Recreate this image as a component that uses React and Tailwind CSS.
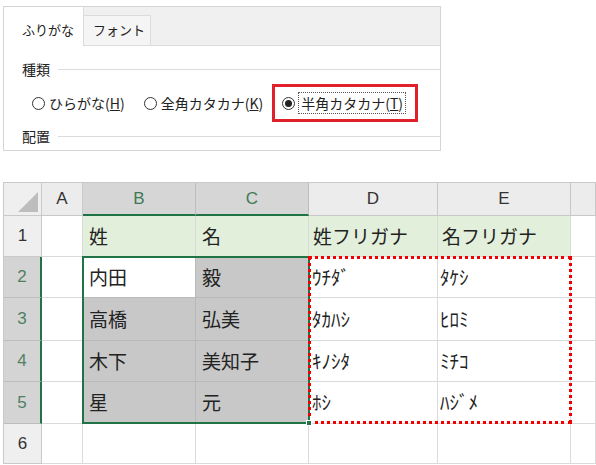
import React from "react";

const cols = ["38px", "41px", "113px", "113px", "129px", "133px", "1fr"];

function Radio({ checked }) {
  return (
    <span className="w-[13px] h-[13px] rounded-full border border-[#333] bg-white flex items-center justify-center shrink-0">
      {checked && <span className="w-[7px] h-[7px] rounded-full bg-[#222]" />}
    </span>
  );
}

function HeaderCell({ children, sel, className = "" }) {
  return (
    <div
      className={
        "flex items-center justify-center border-r border-b text-[17px] font-['Liberation_Sans',sans-serif] " +
        (sel
          ? "bg-[#d6d6d6] text-[#3f7a57] border-[#bdbdbd] "
          : "bg-[#ececec] text-[#333] border-[#c9c9c9] ") +
        className
      }
    >
      {children}
    </div>
  );
}

function RowHead({ children, sel }) {
  return (
    <div
      className={
        "flex items-center justify-center border-r border-b text-[17px] font-['Liberation_Sans',sans-serif] " +
        (sel
          ? "bg-[#d4d4d4] text-[#4f8065] border-[#bdbdbd] border-r-[2px] border-r-[#217346]"
          : "bg-[#efefef] text-[#333] border-[#c9c9c9]")
      }
    >
      {children}
    </div>
  );
}

function Cell({ children, bg = "bg-white", pad = "pl-[6px]", line = "border-[#dadada]" }) {
  return (
    <div
      className={
        "flex items-center border-r border-b text-[#222] text-[19px] " +
        bg +
        " " +
        pad +
        " " +
        line
      }
    >
      {children}
    </div>
  );
}

export default function App() {
  const data = [
    ["内田", "毅", "ｳﾁﾀﾞ", "ﾀｹｼ"],
    ["高橋", "弘美", "ﾀｶﾊｼ", "ﾋﾛﾐ"],
    ["木下", "美知子", "ｷﾉｼﾀ", "ﾐﾁｺ"],
    ["星", "元", "ﾎｼ", "ﾊｼﾞﾒ"],
  ];
  const heights = ["41px", "43px", "41px", "42px"];
  return (
    <div className="w-[596px] h-[465px] bg-white overflow-hidden font-['Noto_Sans_CJK_JP',sans-serif] text-[#333]">
      {/* Dialog */}
      <div className="ml-[3px] mt-[6px] w-[438px] h-[145px] border border-[#d5d5d5] flex flex-col">
        <div className="h-[39px] bg-[#f0f0f0] border-b border-[#dcdcdc] flex items-end">
          <div className="w-[80px] h-[39px] bg-white border-r border-[#dcdcdc] -mb-px flex items-end pl-[18px] pb-[7px] text-[13px] text-[#222]">
            ふりがな
          </div>
          <div className="w-[67px] h-[30px] bg-[#f5f5f5] border-t border-r border-[#dcdcdc] flex items-end pl-[9px] pb-[6px] text-[13px] text-[#222]">
            フォント
          </div>
        </div>
        <div className="flex-1 flex flex-col pl-[18px] pt-[14px]">
          <div className="flex items-center gap-[8px] h-[18px] text-[14px] text-[#222]">
            <span>種類</span>
            <span className="flex-1 h-px bg-[#dcdcdc]" />
          </div>
          <div className="flex items-center h-[38px] mt-[6px] text-[14px] text-[#222]">
            <div className="flex items-center gap-[4px] ml-[10px]">
              <Radio />
              <span>
                ひらがな(<u>H</u>)
              </span>
            </div>
            <div className="flex items-center gap-[4px] ml-[19px]">
              <Radio />
              <span>
                全角カタカナ(<u>K</u>)
              </span>
            </div>
            <div className="ml-[9px] h-[38px] w-[146px] border-[3px] border-[#e0202a] flex items-center pl-[7px] gap-[3px]">
              <Radio checked />
              <span className="border border-dotted border-[#555] px-[2px] leading-[20px]">
                半角カタカナ(<u>T</u>)
              </span>
            </div>
          </div>
          <div className="flex items-center gap-[8px] h-[18px] mt-[5px] text-[14px] text-[#222]">
            <span>配置</span>
            <span className="flex-1 h-px bg-[#dcdcdc]" />
          </div>
        </div>
      </div>

      {/* Spreadsheet */}
      <div className="ml-[3px] mt-[31px] relative border-t border-l border-[#c9c9c9]">
        <div
          className="grid"
          style={{
            gridTemplateColumns: cols.join(" "),
            gridTemplateRows: ["33px", "41px", ...heights, "40px"].join(" "),
          }}
        >
          {/* header row */}
          <div className="bg-[#efefef] border-r border-b border-[#c9c9c9] relative">
            <svg className="absolute right-[3px] bottom-[3px]" width="20" height="20" viewBox="0 0 20 20">
              <polygon points="20,0 20,20 0,20" fill="#bdbdbd" />
            </svg>
          </div>
          <HeaderCell>A</HeaderCell>
          <HeaderCell sel className="border-b-[2px] border-b-[#217346]">B</HeaderCell>
          <HeaderCell sel className="border-b-[2px] border-b-[#217346]">C</HeaderCell>
          <HeaderCell>D</HeaderCell>
          <HeaderCell>E</HeaderCell>
          <HeaderCell> </HeaderCell>

          {/* row 1 */}
          <RowHead>1</RowHead>
          <Cell />
          <Cell bg="bg-[#e2efda]">姓</Cell>
          <Cell bg="bg-[#e2efda]">名</Cell>
          <Cell bg="bg-[#e2efda]" pad="pl-[4px]">姓フリガナ</Cell>
          <Cell bg="bg-[#e2efda]" pad="pl-[4px]">名フリガナ</Cell>
          <Cell />

          {data.map((r, i) => (
            <React.Fragment key={i}>
              <RowHead sel>{i + 2}</RowHead>
              <Cell />
              <Cell bg={i === 0 ? "bg-white" : "bg-[#c8c8c8]"} line="border-[#b9b9b9]">
                {r[0]}
              </Cell>
              <Cell bg="bg-[#c8c8c8]" line="border-[#b9b9b9]">
                {r[1]}
              </Cell>
              <Cell pad="pl-[3px]">{r[2]}</Cell>
              <Cell pad="pl-[2px]">{r[3]}</Cell>
              <Cell />
            </React.Fragment>
          ))}

          {/* row 6 */}
          <RowHead>6</RowHead>
          <Cell />
          <Cell />
          <Cell />
          <Cell />
          <Cell />
          <Cell />
        </div>

        {/* selection border */}
        <div className="absolute left-[78px] top-[73px] w-[228px] h-[168px] border-[2px] border-[#217346] pointer-events-none" />
        {/* copy marquee */}
        <div className="absolute left-[304px] top-[73px] w-[264px] h-[168px] border-[3px] border-dotted border-[#f00000] pointer-events-none" />
        {/* fill handle */}
        <div className="absolute left-[302px] top-[237px] w-[6px] h-[6px] bg-[#217346] border border-white" />
      </div>
    </div>
  );
}
